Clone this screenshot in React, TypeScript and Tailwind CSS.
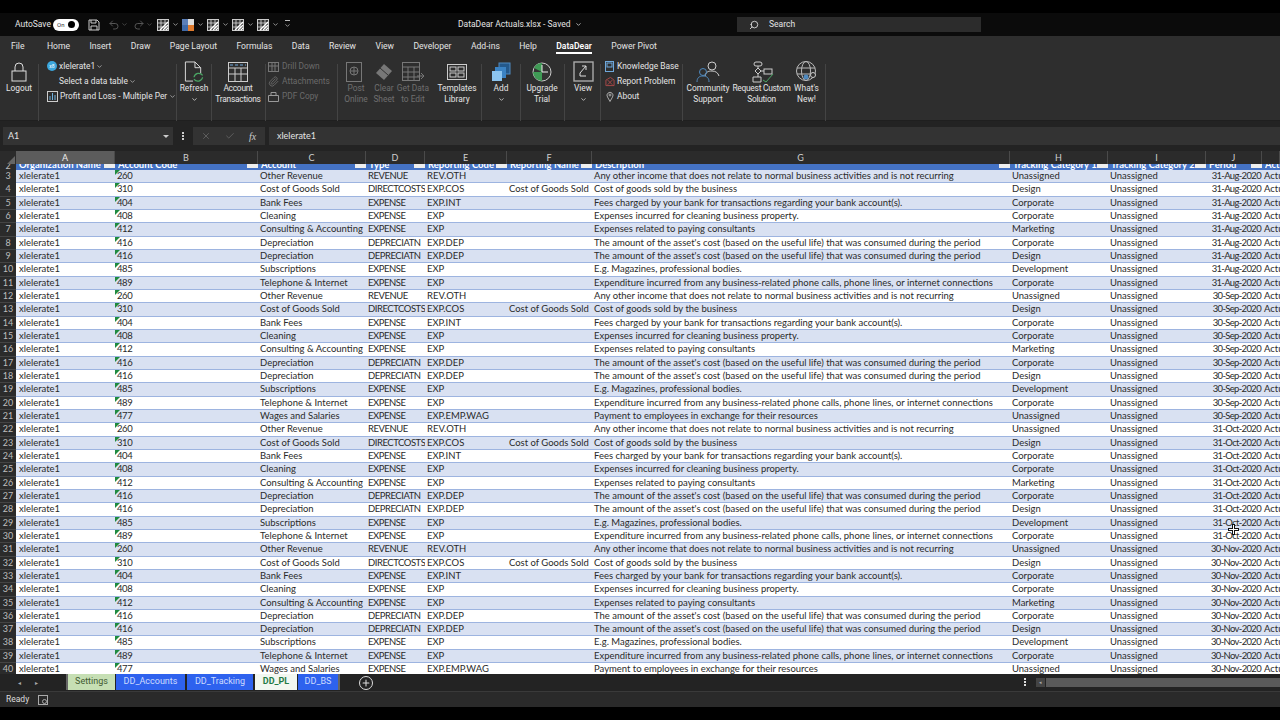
import React from "react";
import { ChevronDown, Search, X, Check, Plus, Paperclip, Undo2, Redo2 } from "lucide-react";

const base = [
  ["260", "Other Revenue", "REVENUE", "REV.OTH", "", "Any other income that does not relate to normal business activities and is not recurring", "Unassigned"],
  ["310", "Cost of Goods Sold", "DIRECTCOSTS", "EXP.COS", "Cost of Goods Sold", "Cost of goods sold by the business", "Design"],
  ["404", "Bank Fees", "EXPENSE", "EXP.INT", "", "Fees charged by your bank for transactions regarding your bank account(s).", "Corporate"],
  ["408", "Cleaning", "EXPENSE", "EXP", "", "Expenses incurred for cleaning business property.", "Corporate"],
  ["412", "Consulting & Accounting", "EXPENSE", "EXP", "", "Expenses related to paying consultants", "Marketing"],
  ["416", "Depreciation", "DEPRECIATN", "EXP.DEP", "", "The amount of the asset's cost (based on the useful life) that was consumed during the period", "Corporate"],
  ["416", "Depreciation", "DEPRECIATN", "EXP.DEP", "", "The amount of the asset's cost (based on the useful life) that was consumed during the period", "Design"],
  ["485", "Subscriptions", "EXPENSE", "EXP", "", "E.g. Magazines, professional bodies.", "Development"],
  ["489", "Telephone & Internet", "EXPENSE", "EXP", "", "Expenditure incurred from any business-related phone calls, phone lines, or internet connections", "Corporate"],
];
const wages = ["477", "Wages and Salaries", "EXPENSE", "EXP.EMP.WAG", "", "Payment to employees in exchange for their resources", "Unassigned"];
const rows: { n: number; c: string[]; d: string }[] = [];
let num = 3;
[["31-Aug-2020", false], ["30-Sep-2020", true], ["31-Oct-2020", false], ["30-Nov-2020", true]].forEach(([d, w]) => {
  (w ? [...base, wages] : base).forEach((c) => rows.push({ n: num++, c, d: d as string }));
});

const GRID = "grid grid-cols-[16px_99px_143px_108px_59px_82px_85px_418px_98px_98px_56px_18px]";
const letters = ["A", "B", "C", "D", "E", "F", "G", "H", "I", "J", ""];
const tabs = ["File", "Home", "Insert", "Draw", "Page Layout", "Formulas", "Data", "Review", "View", "Developer", "Add-ins", "Help", "DataDear", "Power Pivot"];

const Div = ({ m }: { m: string }) => <div className={`w-px h-[60px] bg-[#444] mt-[4px] shrink-0 ${m}`} />;

function Big({ w, icon, label, dim, chev, tight }: { w: string; icon: React.ReactNode; label: string[]; dim?: boolean; chev?: boolean; tight?: boolean }) {
  return (
    <div className={`${w} shrink-0 flex flex-col items-center text-center leading-[10.5px] text-[8.4px] ${dim ? "text-[#6f6f6f]" : "text-[#e4e4e4]"} ${tight ? "tracking-[-0.25px]" : ""}`}>
      <div className="h-[23px] flex items-center justify-center">{icon}</div>
      {label.map((l) => <div key={l} className="whitespace-nowrap">{l}</div>)}
      {chev && <ChevronDown size={7} className="mt-[2px]" strokeWidth={2.5} />}
    </div>
  );
}

const Qat = () => (
  <svg width="12" height="12" viewBox="0 0 12 12"><rect x=".5" y=".5" width="11" height="11" fill="#333" stroke="#ccc" /><path d="M1 4h10M1 8h10M4 1v10M8 1v10" stroke="#ddd" strokeWidth=".8" /><path d="M3 11l8-8M6 11l5-5M9 11l2-2" stroke="#fff" strokeWidth="1.2" /></svg>
);
const Small = ({ c }: { c?: string }) => <ChevronDown size={7} strokeWidth={2.5} className={`shrink-0 ${c ?? "text-[#bbb]"}`} />;

function Sheet({ label, cls }: { label: string; cls: string }) {
  return <div className={`h-[16px] flex items-center justify-center text-[9px] ${cls}`}>{label}</div>;
}

export default function App() {
  return (
    <div className="w-[1280px] h-[720px] overflow-hidden bg-black flex flex-col relative font-['Roboto',sans-serif] text-[#e4e4e4]">
      <div className="h-[13px] shrink-0 bg-black" />
      {/* title */}
      <div className="h-[23px] shrink-0 bg-[#0b0b0b] flex items-center text-[8.5px]">
        <div className="w-[15px] shrink-0" />
        <span className="w-[38px] shrink-0">AutoSave</span>
        <div className="w-[26px] h-[12px] shrink-0 rounded-full bg-white flex items-center justify-between px-[4px] text-[6px] text-[#333]"><span>On</span><span className="w-[7px] h-[7px] rounded-full bg-black" /></div>
        <svg className="ml-[9px] shrink-0" width="12" height="12" viewBox="0 0 12 12" fill="none" stroke="#ccc"><path d="M1 1h8l2 2v8H1z" /><path d="M3 1v3h5V1M3 11V7h6v4" /></svg>
        <Undo2 size={12} className="ml-[8px] text-[#555] shrink-0" />
        <span className="ml-[1px] mr-[5px]"><Small c="text-[#555]" /></span>
        <Redo2 size={12} className="text-[#555] shrink-0" />
        <span className="ml-[1px] mr-[3px]"><Small c="text-[#555]" /></span>
        <div className="ml-[1px] flex items-center gap-[3px]"><Qat /><Small /></div>
        <div className="ml-[3px] flex items-center gap-[3px]">
          <svg width="12" height="12" viewBox="0 0 12 12"><rect width="6" height="6" fill="#5b7fb8" /><rect x="6" width="6" height="6" fill="#ddd" /><rect y="6" width="6" height="6" fill="#3f6aa8" /><rect x="6" y="6" width="6" height="6" fill="#e07b2e" /></svg>
          <Small />
        </div>
        <div className="ml-[3px] flex items-center gap-[3px]"><Qat /><Small /></div>
        <div className="ml-[3px] flex items-center gap-[3px]"><Qat /><Small /></div>
        <div className="ml-[3px] flex items-center gap-[3px]"><Qat /><Small /></div>
        <div className="ml-[5px] flex flex-col items-center gap-[1px]"><div className="w-[5px] h-px bg-[#bbb]" /><Small /></div>
        <div className="w-[167px] shrink-0" />
        <div className="w-[120px] shrink-0 flex items-center gap-[4px] whitespace-nowrap">DataDear Actuals.xlsx - Saved <Small c="text-[#ddd]" /></div>
        <div className="w-[159px] shrink-0" />
        <div className="w-[244px] h-[15px] shrink-0 bg-[#2c2c2c] flex items-center pl-[12px] gap-[10px]"><Search size={10} className="-scale-x-100" /><span>Search</span></div>
      </div>
      {/* ribbon */}
      <div className="h-[85px] shrink-0 bg-[#2e2e2e] border-b border-[#1f1f1f] flex flex-col">
        <div className="h-[23px] shrink-0 pl-[11px] flex items-start gap-[19.400px] text-[8.600px] leading-[12px] pt-[4px]">
          {tabs.map((t) => (
            <div key={t} className={`relative whitespace-nowrap ${t === "File" ? "mr-[3px]" : ""} ${t === "DataDear" ? "text-white font-semibold" : ""}`}>
              {t}
              {t === "DataDear" && <div className="absolute left-0 right-0 top-[12px] h-[2px] bg-white" />}
            </div>
          ))}
        </div>
        <div className="flex pt-[1px] pl-[5px]">
          <Big w="w-[28px]" label={["Logout"]} icon={<svg width="16" height="20" viewBox="0 0 16 20" fill="none" stroke="#ddd"><rect x="1" y="9" width="14" height="10" /><path d="M4 9V5a4 4 0 018 0v4" /></svg>} />
          <Div m="ml-[5px]" />
          <div className="w-[137px] shrink-0 flex flex-col gap-[4.500px] text-[8.4px] pl-[8px] pt-[1px] leading-[10.500px]">
            <div className="flex items-center gap-[1px]"><span className="w-[10px] h-[10px] shrink-0 rounded-full bg-[#3ca6dc] text-[5px] leading-[10px] text-center text-white">x8</span><span className="ml-[1px]">xlelerate1</span><Small /></div>
            <div className="flex items-center gap-[1px] pl-[12px]"><span>Select a data table</span><Small /></div>
            <div className="flex items-center gap-[2px]">
              <svg className="shrink-0" width="11" height="11" viewBox="0 0 11 11" fill="none" stroke="#ccc"><rect x=".5" y=".5" width="10" height="10" /><path d="M3 9V5M5.500 9V2M8 9V4" stroke="#6fb3e0" /></svg>
              <span className="whitespace-nowrap">Profit and Loss - Multiple Per</span><Small />
            </div>
          </div>
          <Div m="" />
          <div className="w-[3px] shrink-0" />
          <Big w="w-[28px]" chev label={["Refresh"]} icon={<svg width="20" height="22" viewBox="0 0 20 23" fill="none"><path d="M1 1h10l6 6v6M1 1v20h8M11 1v6h6" stroke="#ddd" /><path d="M10 17a5 5 0 019-2M19 17a5 5 0 01-9 2" stroke="#4aa564" strokeWidth="1.3" /></svg>} />
          <Div m="ml-[3px]" />
          <div className="w-[2px] shrink-0" />
          <Big tight w="w-[48px]" label={["Account", "Transactions"]} icon={<svg width="20" height="20" viewBox="0 0 20 20" fill="none" stroke="#ccc"><rect x=".5" y=".5" width="19" height="19" /><path d="M1 6h18M1 12h18M7 6v13M13 6v13" /><path d="M2 3h16" stroke="#6fa8dc" strokeDasharray="3 2" /></svg>} />
          <Div m="ml-[3px]" />
          <div className="ml-[2px] w-[69px] shrink-0 flex flex-col gap-[4px] text-[8.4px] leading-[11px] text-[#6a6a6a] pt-[1px]">
            <div className="flex items-center gap-[3px]"><svg className="shrink-0" width="11" height="10" viewBox="0 0 11 10" fill="none" stroke="#777"><rect x=".5" y=".5" width="10" height="9" /><path d="M1 4h9M4 1v8M7 1v8" /></svg>Drill Down</div>
            <div className="flex items-center gap-[3px]"><Paperclip size={11} className="shrink-0" />Attachments</div>
            <div className="flex items-center gap-[3px]"><svg className="shrink-0" width="11" height="10" viewBox="0 0 11 10" fill="none" stroke="#999"><path d="M.5 3.500h10v6H.5zM3 3V.5h5V3" /></svg>PDF Copy</div>
          </div>
          <Div m="" />
          <div className="w-[6px] shrink-0" />
          <Big dim w="w-[24px]" label={["Post", "Online"]} icon={<svg width="20" height="20" viewBox="0 0 20 20" fill="none" stroke="#777"><rect x=".5" y=".5" width="15" height="19" /><circle cx="8" cy="9" r="4" /><path d="M4 9h8M8 5v8" /></svg>} />
          <div className="w-[3px] shrink-0" />
          <Big dim w="w-[26px]" label={["Clear", "Sheet"]} icon={<svg width="20" height="20" viewBox="0 0 20 20"><path d="M2 11l8-9 8 7-8 9z" fill="#777" /><path d="M6 6l8 7" stroke="#333" /></svg>} />
          <Big dim w="w-[32px]" label={["Get Data", "to Edit"]} icon={<svg width="22" height="20" viewBox="0 0 22 20" fill="none" stroke="#777"><rect x=".5" y=".5" width="17" height="18" /><path d="M1 5h17M1 10h17M1 15h17M6 5v14M12 5v14M15 14h7M19 11l3 3-3 3" /></svg>} />
          <div className="w-[10px] shrink-0" />
          <Big w="w-[36px]" label={["Templates", "Library"]} icon={<svg width="20" height="16" viewBox="0 0 20 16" fill="none" stroke="#ccc"><rect x=".5" y=".5" width="19" height="15" /><rect x="3" y="3" width="6" height="4" /><rect x="11" y="3" width="6" height="4" /><rect x="3" y="9" width="6" height="4" /><rect x="11" y="9" width="6" height="4" /></svg>} />
          <Div m="ml-[6px]" />
          <div className="w-[7px] shrink-0" />
          <Big w="w-[24px]" chev label={["Add"]} icon={<svg width="20" height="20" viewBox="0 0 20 20"><rect x="8" y="1" width="11" height="11" fill="#24598c" stroke="#4f8ac0" /><rect x="4" y="5" width="11" height="11" fill="#3b83c4" /><rect x="1" y="9" width="10" height="10" fill="#8cc4ef" /></svg>} />
          <Div m="ml-[7px]" />
          <div className="w-[4px] shrink-0" />
          <Big w="w-[34px]" label={["Upgrade", "Trial"]} icon={<svg width="20" height="20" viewBox="0 0 20 20"><circle cx="10" cy="10" r="9" fill="#333" stroke="#ccc" /><path d="M10 10H1a9 9 0 009 9zM10 10V1a9 9 0 00-8 5z" fill="#3f9a55" /><path d="M10 3v7h6" stroke="#eee" fill="none" /></svg>} />
          <Div m="ml-[5px]" />
          <div className="w-[5px] shrink-0" />
          <Big w="w-[26px]" chev label={["View"]} icon={<svg width="21" height="21" viewBox="0 0 21 21" fill="none"><rect x="1" y="1" width="19" height="19" stroke="#aaa" strokeWidth="1.4" /><path d="M13 5l-6 7v3h6M9 5h4v4" stroke="#ddd" /></svg>} />
          <Div m="ml-[4px]" />
          <div className="ml-[4px] w-[75px] shrink-0 flex flex-col gap-[4px] text-[8.4px] leading-[11px] pt-[1px]">
            <div className="flex items-center gap-[2px] whitespace-nowrap"><svg className="shrink-0" width="10" height="11" viewBox="0 0 10 11" fill="none" stroke="#6fa8dc"><rect x=".5" y=".5" width="8" height="10" /><rect x="2" y="2" width="5" height="4" /></svg>Knowledge Base</div>
            <div className="flex items-center gap-[2px] whitespace-nowrap"><svg className="shrink-0" width="10" height="11" viewBox="0 0 11 11" fill="none" stroke="#b04a4a"><path d="M1 4l5-3 4 3v6H1z" /><path d="M3 4l5 5M8 4L3 9" /></svg>Report Problem</div>
            <div className="flex items-center gap-[2px] whitespace-nowrap"><svg className="shrink-0" width="10" height="11" viewBox="0 0 10 11" fill="none" stroke="#aaa"><path d="M5 10.500L2.500 6a3 3 0 115 0z" /><circle cx="5" cy="4" r="1" /></svg>About</div>
          </div>
          <Div m="ml-[2px]" />
          <div className="w-[3px] shrink-0" />
          <Big w="w-[44px]" label={["Community", "Support"]} icon={<svg width="24" height="22" viewBox="0 0 24 22" fill="none"><circle cx="16" cy="5" r="4" stroke="#ccc" /><path d="M9 15c1-4 3-5 7-5s6 2 7 5" stroke="#ccc" /><circle cx="7" cy="11" r="3.500" stroke="#4f8ac0" /><path d="M1 21c0-4 2-6 6-6s6 2 6 6" stroke="#4f8ac0" /></svg>} />
          <div className="w-[3px] shrink-0" />
          <Big tight w="w-[57px]" label={["Request Custom", "Solution"]} icon={<svg width="24" height="22" viewBox="0 0 24 22" fill="none" stroke="#ccc"><rect x="4" y="1" width="8" height="4" rx="2" /><path d="M8 5v2M8 7l3 3-3 3-3-3zM8 13v3M3 16h8v5H3z" /><rect x="14" y="8" width="8" height="5" /><path d="M11 10h3" /><path d="M13 19l3 2 7-8" stroke="#4aa564" /></svg>} />
          <div className="w-[3px] shrink-0" />
          <Big w="w-[27px]" label={["What's", "New!"]} icon={<svg width="22" height="22" viewBox="0 0 22 22" fill="none"><circle cx="10" cy="10" r="9.500" stroke="#bbb" /><ellipse cx="10" cy="10" rx="4.500" ry="9.500" stroke="#bbb" /><path d="M1 7h18M1 13h18" stroke="#bbb" /><circle cx="17" cy="14" r="2.500" stroke="#ccc" fill="#2e2e2e" /><circle cx="10" cy="16" r="2.500" fill="#4f8ac0" /></svg>} />
          <Div m="ml-[5px]" />
        </div>
      </div>
      {/* formula bar */}
      <div className="h-[30px] shrink-0 bg-[#232323] flex items-start pt-[6px] text-[9px] font-['Lato',sans-serif]">
        <div className="w-[170px] h-[18px] ml-[3px] bg-[#333] flex items-center justify-between pl-[5px] pr-[4px]"><span>A1</span><span className="w-0 h-0 border-x-[3px] border-x-transparent border-t-[3px] border-t-[#ccc]" /></div>
        <div className="w-[20px] h-[18px] flex flex-col items-center justify-center gap-[1px]"><i className="w-[2px] h-[2px] bg-[#ccc]" /><i className="w-[2px] h-[2px] bg-[#ccc]" /><i className="w-[2px] h-[2px] bg-[#ccc]" /></div>
        <div className="w-[72px] h-[18px] bg-[#333] flex items-center pl-[8px] gap-[14px] text-[#666]"><X size={10} /><Check size={10} /><span className="font-['Liberation_Serif',serif] italic text-[#ccc] text-[10px]">fx</span></div>
        <div className="flex-1 h-[18px] ml-[4px] bg-[#333] flex items-center pl-[8px]">xlelerate1</div>
      </div>
      {/* column header */}
      <div className={`${GRID} h-[13px] shrink-0 bg-[#2b2b2b] text-[9px] text-[#cfcfcf] font-['Lato',sans-serif]`}>
        <div className="flex items-end justify-end pr-[1px]"><span className="w-0 h-0 border-l-[9px] border-l-transparent border-b-[9px] border-b-[#666]" /></div>
        {letters.map((l, i) => (
          <div key={i} className={`flex items-center justify-center border-r border-[#4a4a4a] ${i === 0 ? "bg-[#5c5c5c] text-[#eee]" : ""}`}>{l}</div>
        ))}
      </div>
      {/* cells */}
      <div className="h-[510px] shrink-0 overflow-hidden bg-white flex flex-col font-['Lato',sans-serif] text-[9.470px] text-[#2a2a2a]">
        <div className={`${GRID} h-[6px] shrink-0 bg-[#4472c4] text-white overflow-hidden`}>
          <div className="bg-[#2b2b2b] text-[#bbb] text-center text-[9px] leading-[3px]">2</div>
          {["Organization Name", "Account Code", "Account", "Type", "Reporting Code", "Reporting Name", "Description", "Tracking Category 1", "Tracking Category 2", "Period", "Actual"].map((h, i) => (
            <div key={h} className="flex pl-[3px] min-w-0 overflow-hidden">
              <span className="flex-1 min-w-0 overflow-hidden leading-[0px] font-bold whitespace-nowrap pt-[1px]">{h}</span>
              {i < 10 && <span className="shrink-0 w-[11px] h-[3.500px] bg-[#eee]" />}
            </div>
          ))}
        </div>
        {rows.map((r) => (
          <div key={r.n} className={`${GRID} h-[13.340px] shrink-0 border-b border-[#9db4e0] leading-[12.500px] ${r.n % 2 ? "bg-[#d9e1f2]" : "bg-white"}`}>
            <div className="bg-[#2b2b2b] text-[#bdbdbd] text-[9px] text-center border-b border-[#444]">{r.n}</div>
            <div className="pl-[3px] overflow-hidden whitespace-nowrap">xlelerate1</div>
            <div className="pl-[2px] relative overflow-hidden whitespace-nowrap tracking-[-0.4px]"><span className="absolute left-0 top-0 w-0 h-0 border-r-[5px] border-r-transparent border-t-[5px] border-t-[#1f8a3f]" />{r.c[0]}</div>
            {r.c.slice(1, 6).map((v, i) => (
              <div key={i} className={`pl-[2px] overflow-hidden whitespace-nowrap ${i === 1 ? "tracking-[-0.45px]" : ""}`}>{v}</div>
            ))}
            <div className="pl-[2px] overflow-hidden whitespace-nowrap">{r.c[6]}</div>
            <div className="pl-[2px] overflow-hidden whitespace-nowrap">Unassigned</div>
            <div className="pr-[1px] text-right overflow-hidden whitespace-nowrap tracking-[-0.65px]">{r.d}</div>
            <div className="pl-[2px] overflow-hidden whitespace-nowrap">Actual</div>
          </div>
        ))}
      </div>
      {/* sheet tabs */}
      <div className="h-[17px] shrink-0 bg-[#232323] flex items-start text-[#aaa]">
        <div className="w-[66px] h-[16px] shrink-0 flex items-center pl-[18px] gap-[14px] text-[6px]"><span>◂</span><span>▸</span></div>
        <Sheet label="Settings" cls="w-[49px] shrink-0 border-l-2 border-[#666] bg-[#c6dfb4] text-[#3f5a30]" />
        <Sheet label="DD_Accounts" cls="w-[69px] shrink-0 ml-[1px] bg-[#2e62ee] text-[#cfdcff]" />
        <Sheet label="DD_Tracking" cls="w-[66px] shrink-0 ml-[2px] bg-[#2e62ee] text-[#cfdcff]" />
        <Sheet label="DD_PL" cls="w-[42px] shrink-0 ml-[2px] bg-[#f2f7f0] text-[#1f7a45] font-bold" />
        <Sheet label="DD_BS" cls="w-[42px] shrink-0 ml-[1px] bg-[#2e62ee] text-[#cfdcff] border-r-2 border-[#666]" />
        <div className="w-[20px] shrink-0" />
        <Plus size={10} strokeWidth={2.5} className="mt-[2px] p-[1px] rounded-full border border-[#ddd] text-[#ddd] box-content -ml-[1px] shrink-0" />
        <div className="w-[651px] shrink-0" />
        <div className="h-[16px] flex flex-col items-center justify-center gap-[1px] shrink-0"><i className="w-[2px] h-[2px] bg-[#ddd]" /><i className="w-[2px] h-[2px] bg-[#ddd]" /><i className="w-[2px] h-[2px] bg-[#ddd]" /></div>
        <div className="w-[10px] shrink-0" />
        <div className="w-[9px] h-[9px] mt-[4px] bg-[#444] text-[5px] leading-[9px] text-center shrink-0">◂</div>
        <div className="flex-1 h-[9px] mt-[4px] ml-[1px] bg-[#5a5a5a]" />
      </div>
      {/* status */}
      <div className="h-[16px] shrink-0 bg-[#2a2a2a] border-t border-[#3a3a3a] flex items-center pl-[6px] text-[8.500px] text-[#ddd]">
        <span className="w-[32px]">Ready</span>
        <svg width="10" height="10" viewBox="0 0 10 10" fill="none" stroke="#aaa"><rect x=".5" y=".5" width="9" height="9" /><circle cx="6.500" cy="6.500" r="2" /></svg>
      </div>
      <div className="flex-1 bg-black" />
      {/* mouse cursor */}
      <svg className="absolute left-[1228px] top-[524px]" width="11" height="11" viewBox="0 0 11 11"><path d="M5.500 0v11M0 5.500h11" stroke="#111" strokeWidth="3" /><path d="M5.500 1v9M1 5.500h9" stroke="#fff" strokeWidth="1" /></svg>
    </div>
  );
}
